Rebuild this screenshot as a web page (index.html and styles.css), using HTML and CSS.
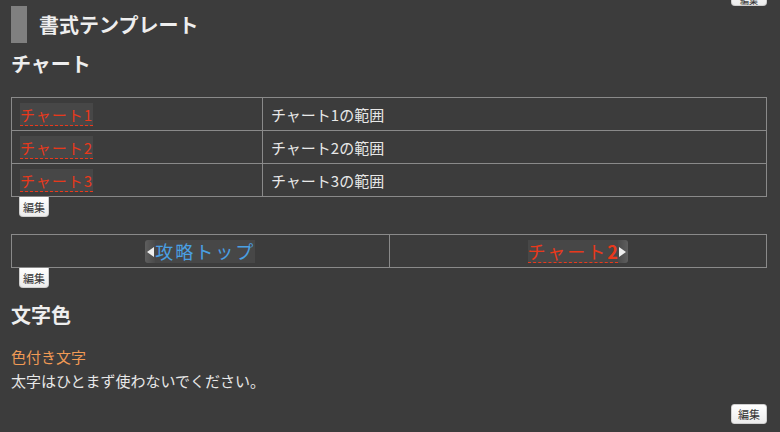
FILE: index.html
```html
<!DOCTYPE html>
<html lang="ja">
<head>
<meta charset="utf-8">
<title>書式テンプレート</title>
<link rel="stylesheet" href="styles.css">
</head>
<body>
<div class="top-row"><span class="edit edit-top">編集</span></div>
<h2 class="page-title">書式テンプレート</h2>
<h3 class="section">チャート</h3>
<table class="grid">
  <tr><td class="c1"><a class="link">チャート1</a></td><td>チャート1の範囲</td></tr>
  <tr><td class="c1"><a class="link">チャート2</a></td><td>チャート2の範囲</td></tr>
  <tr><td class="c1"><a class="link">チャート3</a></td><td>チャート3の範囲</td></tr>
</table>
<div class="edit-row"><span class="edit edit-tab">編集</span></div>
<table class="grid nav">
  <tr>
    <td><span class="navlink"><span class="arrow arrow-l"></span><a class="blue">攻略トップ</a></span></td>
    <td><span class="navlink"><a class="link big">チャート<b>2</b></a><span class="arrow arrow-r"></span></span></td>
  </tr>
</table>
<div class="edit-row"><span class="edit edit-tab">編集</span></div>
<h3 class="section s2">文字色</h3>
<p class="body-text"><span class="orange">色付き文字</span><br>太字はひとまず使わないでください。</p>
<div class="bottom-row"><span class="edit edit-full">編集</span></div>
</body>
</html>
```
FILE: styles.css
```css
html, body {
  margin: 0;
  background: #3c3c3c;
}
body {
  padding: 0 13px 0 11px;
  color: #e8e8e8;
  font-family: "Noto Sans CJK JP", "Liberation Sans", sans-serif;
  font-size: 15px;
}
.top-row {
  display: flex;
  justify-content: flex-end;
  height: 6px;
}
.edit {
  display: inline-flex;
  align-items: center;
  justify-content: center;
  background: linear-gradient(#ffffff, #ececec);
  color: #333;
  font-size: 11px;
  height: 20px;
  box-sizing: border-box;
  border: 1px solid #cfcfcf;
}
.edit-top {
  width: 36px;
  margin-top: -13px;
  height: 19px;
  border-radius: 0 0 4px 4px;
  border-top: none;
  font-size: 9px;
  line-height: 9px;
  align-items: flex-end;
}
.edit-row {
  display: flex;
  padding-left: 8px;
}
.edit-tab {
  width: 30px;
  border-radius: 0 0 4px 4px;
  border-top: none;
}
.page-title {
  margin: 0;
  height: 37px;
  line-height: 37px;
  border-left: 16px solid #808080;
  padding-left: 12px;
  font-size: 20px;
  font-weight: bold;
  color: #eeeeee;
}
.section {
  margin: 7px 0 19px;
  line-height: 28px;
  height: 28px;
  font-size: 20px;
  font-weight: bold;
  color: #eeeeee;
}
.s2 {
  margin: 13px 0 16px;
}
.grid {
  width: 100%;
  border-collapse: collapse;
}
.grid td {
  border: 1px solid #8a8a8a;
  height: 33px;
  padding: 0 0 0 8px;
  box-sizing: border-box;
  vertical-align: middle;
}
.grid td.c1 {
  width: 251px;
}
.link {
  color: #e8391c;
  background: #474747;
  border-bottom: 1px dashed #e8391c;
  letter-spacing: 1px;
  padding: 1px 0 0;
}
.nav {
  margin-top: 17px;
}
.nav td {
  width: 50%;
  text-align: center;
  padding: 0;
}
.navlink {
  display: inline-flex;
  align-items: stretch;
  height: 23px;
  vertical-align: middle;
}
.navlink a {
  font-size: 18px;
  line-height: 22px;
  letter-spacing: 2px;
  padding: 0;
}
.blue {
  color: #4aa0e4;
  background: #474747;
}
.big b {
  font-weight: bold;
  letter-spacing: 0;
}
.arrow {
  width: 10px;
  background: linear-gradient(90deg, #5e5e5e, #4a4a4a);
  position: relative;
}
.arrow-l {
  border-radius: 3px 0 0 3px;
}
.arrow-r {
  border-radius: 0 3px 3px 0;
  background: linear-gradient(90deg, #4a4a4a, #5e5e5e);
}
.arrow::after {
  content: "";
  position: absolute;
  top: 7px;
  border-top: 5px solid transparent;
  border-bottom: 5px solid transparent;
}
.arrow-l::after {
  right: 1px;
  border-right: 7px solid #eeeeee;
}
.arrow-r::after {
  left: 1px;
  border-left: 7px solid #eeeeee;
}
.body-text {
  margin: 0;
  line-height: 24px;
  font-size: 15px;
  color: #e8e8e8;
}
.orange {
  color: #f09a55;
}
.bottom-row {
  display: flex;
  justify-content: flex-end;
  margin-top: 11px;
}
.edit-full {
  width: 36px;
  border-radius: 3px;
}
```
